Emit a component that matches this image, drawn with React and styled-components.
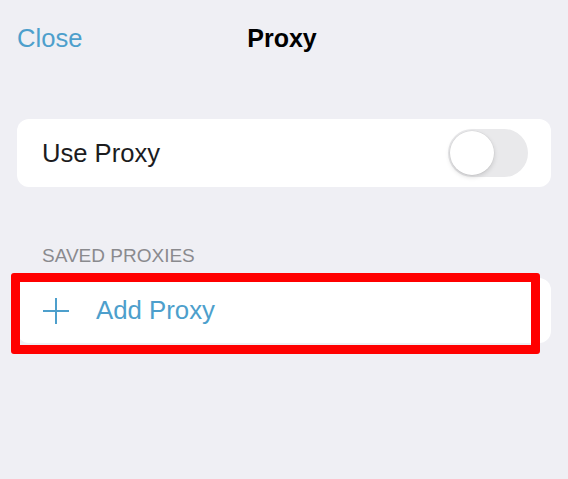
import React, { useState } from "react";
import styled, { createGlobalStyle } from "styled-components";

const Global = createGlobalStyle`
  html, body { margin: 0; padding: 0; background: #efeff4; }
  body { font-family: "Liberation Sans", Arial, sans-serif; -webkit-font-smoothing: antialiased; }
`;

const Page = styled.div`
  width: 568px;
  height: 479px;
  background: #efeff4;
  display: flex;
  flex-direction: column;
`;

const NavBar = styled.div`
  height: 76px;
  display: grid;
  grid-template-columns: 1fr auto 1fr;
  align-items: center;
  padding: 0 17px;
`;

const NavButton = styled.button`
  justify-self: start;
  background: none;
  border: none;
  padding: 0;
  font-family: inherit;
  font-size: 25.6px;
  color: #4d9fcc;
  cursor: pointer;
`;

const Title = styled.div`
  font-size: 25px;
  font-weight: 700;
  color: #000;
  margin-right: 4px;
`;

const Card = styled.div`
  position: relative;
  margin: ${(p) => p.$top}px 17px 0;
  height: ${(p) => p.$height}px;
  background: #fff;
  border-radius: 12px;
  display: flex;
  align-items: center;
  padding: 0 23px 0 25px;
`;

const RowLabel = styled.span`
  flex: 1;
  font-size: 25.6px;
  color: #1c1c1e;
`;

const SwitchTrack = styled.button`
  width: 80px;
  height: 48px;
  border-radius: 24px;
  border: none;
  padding: 2px;
  background: ${(p) => (p.$on ? "#34c759" : "#e9e9eb")};
  display: flex;
  justify-content: ${(p) => (p.$on ? "flex-end" : "flex-start")};
  cursor: pointer;
`;

const SwitchKnob = styled.span`
  width: 44px;
  height: 44px;
  border-radius: 50%;
  background: #fff;
  box-shadow: 0 2px 5px rgba(0, 0, 0, 0.15), 0 0 0 0.5px rgba(0, 0, 0, 0.06);
`;

const SectionHeader = styled.div`
  margin: 59px 0 0 42px;
  font-size: 19px;
  line-height: 20px;
  color: #8a8a8e;
  text-transform: uppercase;
`;

const ActionIcon = styled.svg`
  width: 28px;
  height: 28px;
  margin-right: 26px;
  flex-shrink: 0;
`;

const ActionLabel = styled.span`
  font-size: 25.8px;
  color: #4d9fcc;
`;

const Highlight = styled.div`
  position: absolute;
  left: -6px;
  top: -5px;
  width: 529px;
  height: 81px;
  box-sizing: border-box;
  border: 9px solid #ff0000;
  border-radius: 3px;
  pointer-events: none;
`;

export default function App() {
  const [on, setOn] = useState(false);
  return (
    <>
      <Global />
      <Page>
        <NavBar>
          <NavButton>Close</NavButton>
          <Title>Proxy</Title>
          <span />
        </NavBar>
        <Card $top={43} $height={68}>
          <RowLabel>Use Proxy</RowLabel>
          <SwitchTrack $on={on} onClick={() => setOn(!on)}>
            <SwitchKnob />
          </SwitchTrack>
        </Card>
        <SectionHeader>Saved Proxies</SectionHeader>
        <Card $top={12} $height={65}>
          <ActionIcon viewBox="0 0 28 28">
            <path d="M14 1v26M1 14h26" stroke="#4d9fcc" strokeWidth="2" fill="none" />
          </ActionIcon>
          <ActionLabel>Add Proxy</ActionLabel>
          <Highlight />
        </Card>
      </Page>
    </>
  );
}
